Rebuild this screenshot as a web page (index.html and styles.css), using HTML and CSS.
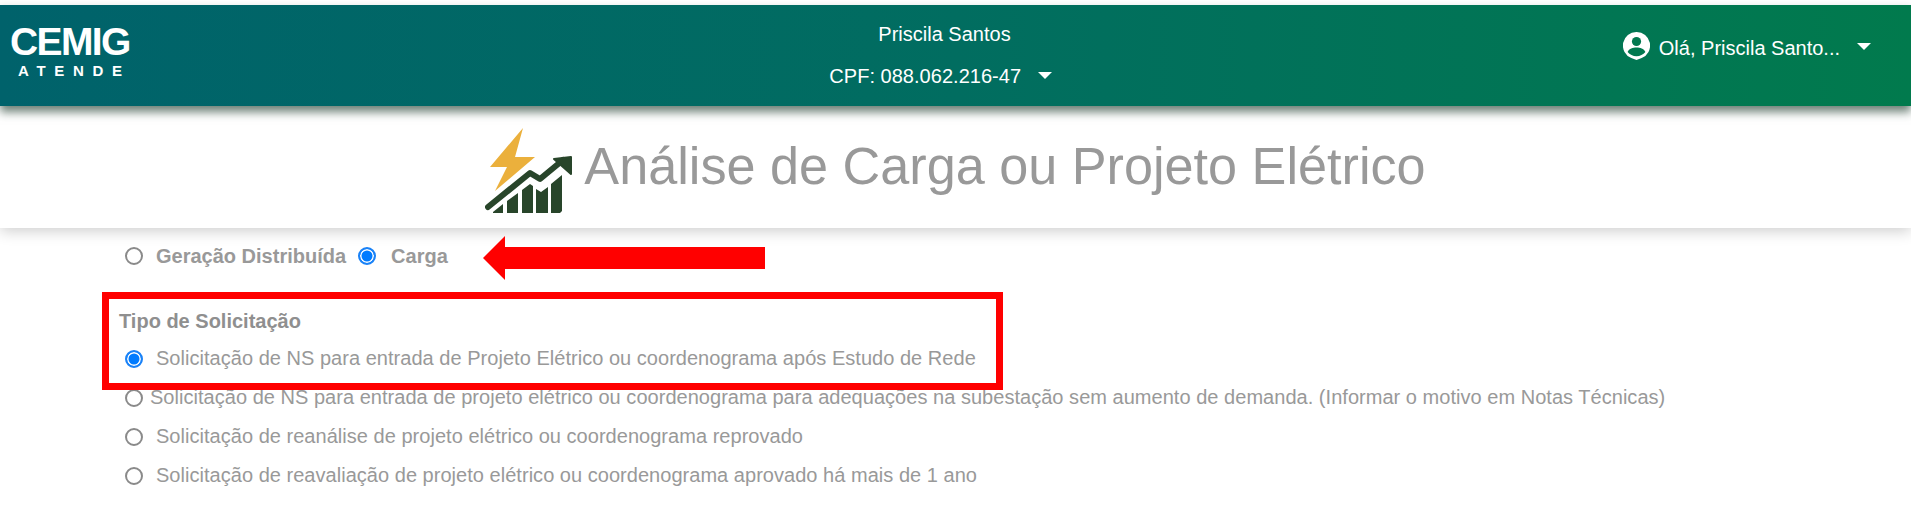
FILE: index.html
```html
<!DOCTYPE html>
<html lang="pt-BR">
<head>
    <meta charset="UTF-8">
    <meta name="viewport" content="width=device-width, initial-scale=1.0">
    <title>Análise de Carga ou Projeto Elétrico</title>
    <link rel="stylesheet" href="styles.css">
</head>
<body>
    <header class="topbar">
        <div class="logo">
            <span class="logo-name">CEMIG</span>
            <span class="logo-sub">ATENDE</span>
        </div>
        <div class="account">
            <span class="account-name">Priscila Santos</span>
            <span class="account-cpf">CPF: 088.062.216-47 <i class="caret"></i></span>
        </div>
        <div class="user">
            <svg class="user-icon" viewBox="0 0 27 28">
                <path fill="#fff" d="M13.5 0a13.5 13.5 0 0 1 5.200 26l-5.200 2-5.200-2A13.500 13.500 0 0 1 13.500 0z"/>
                <circle fill="#01784f" cx="13.5" cy="9.5" r="4.6"/>
                <path fill="#01784f" d="M4.600 20c1.600-3.600 5.200-4.600 8.900-4.600s7.300 1 8.900 4.600c-2.200 2.600-5.400 4.200-8.900 4.200s-6.700-1.600-8.900-4.200z"/>
            </svg>
            <span class="user-name">Olá, Priscila Santo...</span>
            <i class="caret"></i>
        </div>
    </header>

    <section class="title-band">
        <svg class="title-icon" viewBox="0 0 88 88">
            <path fill="#ebb03c" d="M38 0 5 39h17L10 63l40-34H30z"/>
            <path fill="none" stroke="#fff" stroke-width="12" stroke-linejoin="round" d="M3 84l42-34 10 6 23-19"/>
            <path fill="none" stroke="#28452a" stroke-width="6" stroke-linecap="round" stroke-linejoin="round" d="M3 79l42-34 10 6 23-19"/>
            <path fill="#28452a" stroke="#28452a" stroke-width="2" stroke-linejoin="round" d="M69 31l17-2v17z"/>
            <path fill="#28452a" d="M8 85v-1l10-8v9zM22 85V73l11-8v20zM37 85V62l8-6 3 2v27zM51 85V61l5 3 7-5v26zM66 85V56l11-9v36l-2 2z"/>
        </svg>
        <h1>Análise de Carga ou Projeto Elétrico</h1>
    </section>

    <main class="content">
        <div class="type-row">
            <label class="radio-item"><i class="radio"></i><b>Geração Distribuída</b></label>
            <label class="radio-item"><i class="radio checked"></i><b>Carga</b></label>
        </div>

        <h2>Tipo de Solicitação</h2>
        <ul class="options">
            <li><i class="radio checked"></i><span>Solicitação de NS para entrada de Projeto Elétrico ou coordenograma após Estudo de Rede</span></li>
            <li class="tight"><i class="radio"></i><span>Solicitação de NS para entrada de projeto elétrico ou coordenograma para adequações na subestação sem aumento de demanda. (Informar o motivo em Notas Técnicas)</span></li>
            <li><i class="radio"></i><span>Solicitação de reanálise de projeto elétrico ou coordenograma reprovado</span></li>
            <li><i class="radio"></i><span>Solicitação de reavaliação de projeto elétrico ou coordenograma aprovado há mais de 1 ano</span></li>
        </ul>
    </main>

    <!-- marcacoes por cima da tela -->
    <svg class="mark-arrow" viewBox="0 0 282 44"><path fill="#f00" d="M0 22 22 0v11h260v22H22v11z"/></svg>
    <div class="mark-box"></div>
</body>
</html>
```

FILE: styles.css
```css
* {
    margin: 0;
    padding: 0;
    box-sizing: border-box;
}

body {
    font-family: "Liberation Sans", Arial, sans-serif;
    background: #fff;
    color: #999;
    padding-top: 5px;
    height: 514px;
    overflow: hidden;
    position: relative;
}

.topbar {
    height: 101px;
    display: grid;
    grid-template-columns: 1fr 1fr 1fr;
    background: linear-gradient(90deg, #00626b 0%, #016d60 50%, #017a4d 100%);
    box-shadow: 0 6px 9px rgba(30, 60, 45, 0.65);
    color: #fff;
    position: relative;
    z-index: 1;
}

.logo {
    display: flex;
    flex-direction: column;
    padding: 19px 0 0 10px;
    width: 140px;
}

.logo-name {
    font-size: 39px;
    font-weight: bold;
    line-height: 36px;
    letter-spacing: -1.6px;
}

.logo-sub {
    font-size: 15px;
    font-weight: bold;
    line-height: 18px;
    letter-spacing: 8.7px;
    padding-left: 8px;
    margin-top: 2px;
}

.account {
    display: flex;
    flex-direction: column;
    align-items: center;
    font-size: 20px;
    padding: 18px 30px 0 0;
    gap: 19px;
    line-height: 23px;
}

.account-name {
    padding-left: 8px;
}

.account-cpf {
    letter-spacing: 0.03px;
}

.account-cpf .caret {
    margin: 0 0 5px 11px;
}

.caret {
    display: inline-block;
    vertical-align: middle;
    border-top: 7px solid #fff;
    border-left: 7px solid transparent;
    border-right: 7px solid transparent;
}

.user {
    display: flex;
    align-items: flex-start;
    justify-content: flex-end;
    padding: 27px 40px 0 0;
    font-size: 20px;
    line-height: 32px;
}

.user-name {
    margin: 0 17px 0 9px;
}

.user .caret {
    margin-top: 11px;
}

.user-icon {
    width: 27px;
    height: 28px;
}

.title-band {
    height: 122px;
    display: flex;
    justify-content: center;
    align-items: flex-start;
    gap: 11px;
    padding-top: 22px;
    background: #fff;
    box-shadow: 0 3px 14px rgba(0, 0, 0, 0.2);
    position: relative;
}

.title-icon {
    width: 88px;
    height: 88px;
    flex: none;
}

h1 {
    font-size: 52.2px;
    font-weight: normal;
    line-height: 60px;
    margin-top: 8px;
    color: #999;
}

.content {
    padding: 15px 0 0 125px;
    font-size: 20px;
}

.type-row {
    display: flex;
    gap: 12px;
    height: 26px;
    align-items: center;
}

.radio-item {
    display: flex;
    align-items: center;
}

.radio-item b {
    font-size: 20px;
    margin-left: 13px;
}

.radio-item + .radio-item b {
    margin-left: 15px;
}

.radio {
    flex: none;
    display: block;
    width: 18px;
    height: 18px;
    border: 2px solid #8a8a8a;
    border-radius: 50%;
    background: #fff;
}

.radio.checked {
    border-color: #1a82f7;
    background: #007bff;
    box-shadow: inset 0 0 0 1.5px #fff;
}

h2 {
    font-size: 20px;
    font-weight: bold;
    line-height: 23px;
    margin: 41px 0 0 -6px;
    color: #8f8f8f;
}

.options {
    list-style: none;
    margin-top: 6px;
    letter-spacing: 0.03px;
}

.options li {
    display: flex;
    align-items: center;
    height: 39px;
}

.options span {
    margin-left: 13px;
}

.options .tight span {
    margin-left: 7px;
}

.mark-arrow {
    position: absolute;
    left: 483px;
    top: 236px;
    width: 282px;
    height: 44px;
}

.mark-box {
    position: absolute;
    left: 102px;
    top: 292px;
    width: 901px;
    height: 98px;
    border: 7px solid #f00;
}
```
